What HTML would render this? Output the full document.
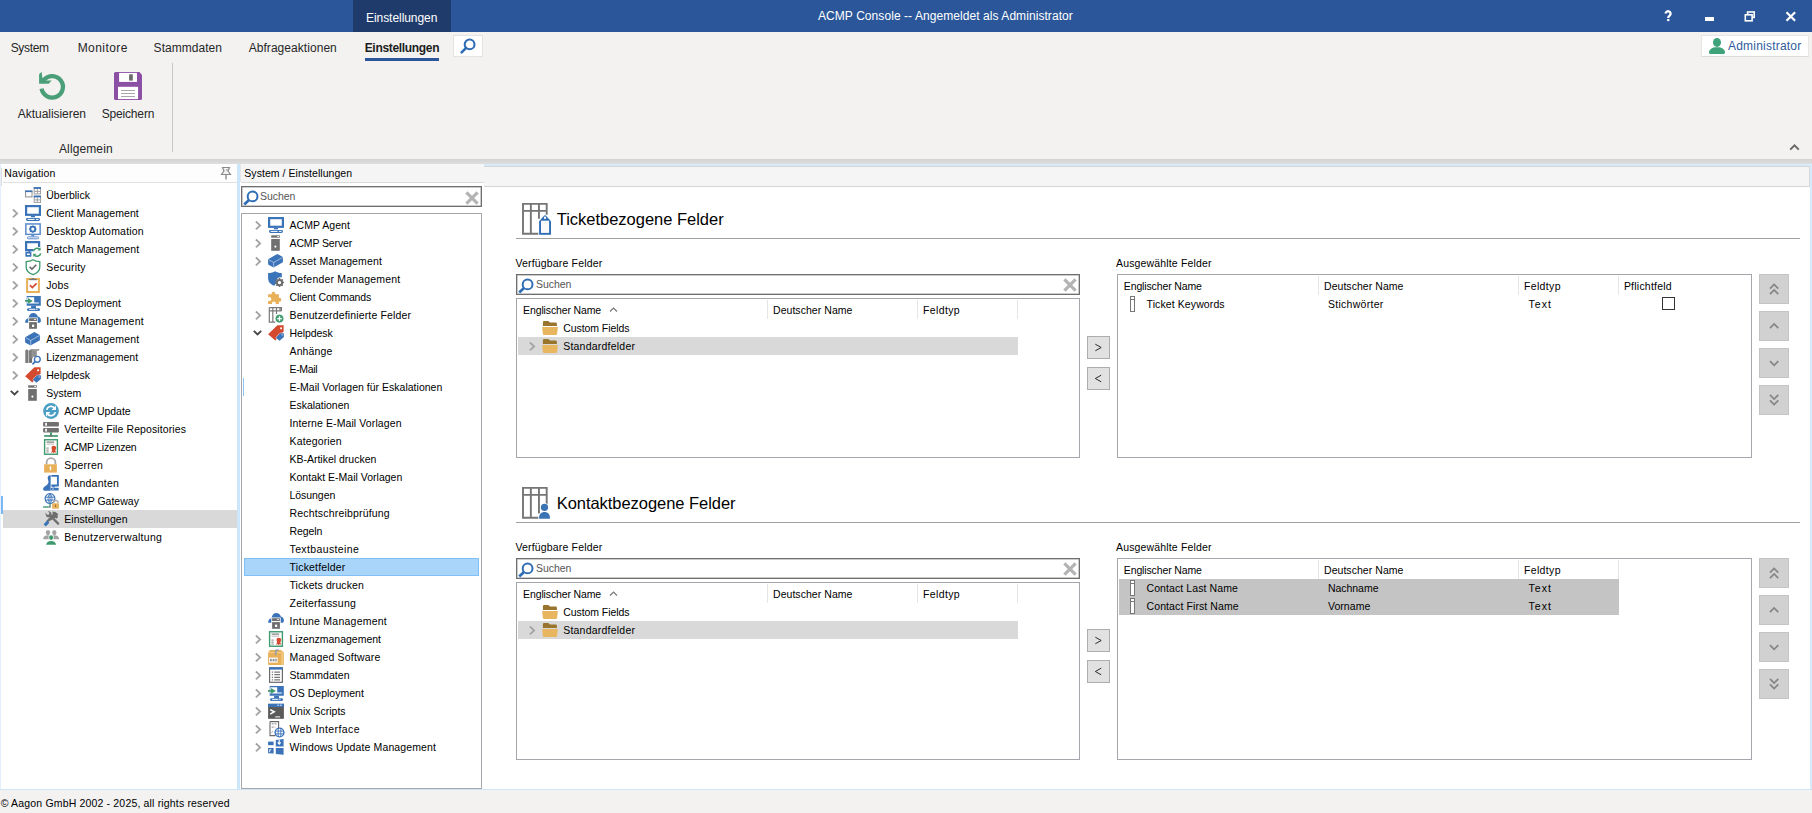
<!DOCTYPE html>
<html><head><meta charset="utf-8"><title>ACMP Console</title>
<style>
html,body{margin:0;padding:0;width:1812px;height:813px;overflow:hidden;background:#f3f2f1;font-family:"Liberation Sans", sans-serif;}
</style></head><body>
<div style="position:absolute;left:0px;top:0px;width:1812px;height:32px;background:#2b579a"></div><div style="position:absolute;left:353px;top:0px;width:98px;height:32px;background:#1f3b6b"></div><svg style="position:absolute;left:1660px;top:8px" width="16" height="16" viewBox="0 0 16 16"><path d="M5.6 5.6a2.5 2.4 0 1 1 4.2 1.8c-1 .8-1.6 1.2-1.6 2.5" fill="none" stroke="#fff" stroke-width="2.3"/><rect x="7.1" y="11" width="2.3" height="2.1" fill="#fff"/></svg><div style="position:absolute;left:1705px;top:17.4px;width:9px;height:3.2px;background:#fff"></div><svg style="position:absolute;left:1744px;top:11px" width="12" height="11" viewBox="0 0 12 11"><rect x="3.6" y="1" width="6.6" height="5.4" fill="none" stroke="#fff" stroke-width="1.6"/><rect x="1.3" y="3.8" width="6.8" height="6" fill="#2b579a" stroke="#fff" stroke-width="1.6"/></svg><svg style="position:absolute;left:1785px;top:11px" width="12" height="11" viewBox="0 0 12 11"><path d="M1.5 1.2l8.6 8.6M10.1 1.2l-8.6 8.6" stroke="#fff" stroke-width="2.2"/></svg><div style="position:absolute;left:0px;top:32px;width:1812px;height:127px;background:#f3f2f1"></div><div style="position:absolute;left:365px;top:58px;width:74px;height:3px;background:#2b579a"></div><div style="position:absolute;left:453px;top:35px;width:30px;height:22px;background:#fff;box-sizing:border-box;border:1px solid #e3e3e3"></div><svg style="position:absolute;left:459px;top:38px" width="18" height="17" viewBox="0 0 18 17"><circle cx="10.6" cy="6.4" r="4.9" fill="none" stroke="#2f6db5" stroke-width="2.1"/><path d="M7.2 9.8L2.6 14.4" stroke="#2f6db5" stroke-width="2.6" stroke-linecap="round"/></svg><div style="position:absolute;left:1701px;top:35px;width:108px;height:22px;background:#fff;box-sizing:border-box;border:1px solid #e6e6e6;border-bottom-color:#dcdcdc"></div><svg style="position:absolute;left:1708px;top:37px" width="18" height="18" viewBox="0 0 18 18"><ellipse cx="9" cy="5.4" rx="4" ry="4.5" fill="#3ea37a"/><path d="M1 15.5C1 12.6 3.2 11.1 6.3 10.2H11.7C14.8 11.1 17 12.6 17 15.5Q17 17.1 15.4 17.1H2.6Q1 17.1 1 15.5z" fill="#3ea37a"/></svg><svg style="position:absolute;left:37px;top:70px" width="30" height="32" viewBox="0 0 30 32"><path d="M4.6 18.7A10.75 10.75 0 1 0 6.95 9.94" fill="none" stroke="#4a9e78" stroke-width="4.3"/><path d="M4.61 1.84L5.35 7.74L9.33 10.4H14.65L11.69 13.79H2.1V4.2z" fill="#4a9e78"/></svg><svg style="position:absolute;left:114px;top:72px" width="28" height="28" viewBox="0 0 28 28"><path d="M0 1.5A1.5 1.5 0 0 1 1.5 0h24L28 3v23.5a1.5 1.5 0 0 1-1.5 1.5h-25A1.5 1.5 0 0 1 0 26.5z" fill="#8b4fa3"/><rect x="5.1" y="0.9" width="17.9" height="9" fill="#fff"/><rect x="15.1" y="2.3" width="3.7" height="6.3" fill="#6b6b6b"/><rect x="4" y="14.8" width="20.1" height="12.3" fill="#fff"/><path d="M7 18.5h14M7 21.5h14M7 24.5h14" stroke="#a8a8a8" stroke-width="1"/></svg><div style="position:absolute;left:172px;top:63px;width:1px;height:89px;background:#c6c6c6"></div><svg style="position:absolute;left:1789px;top:143px" width="11" height="9" viewBox="0 0 11 9"><path d="M1.2 6.6L5.5 2.4L9.8 6.6" fill="none" stroke="#666" stroke-width="2"/></svg><div style="position:absolute;left:0px;top:159px;width:1812px;height:5px;background:linear-gradient(#d3d3d3,#dedede)"></div><div style="position:absolute;left:0px;top:164px;width:1812px;height:626px;background:#ffffff"></div><div style="position:absolute;left:0px;top:164px;width:1px;height:625px;background:#e3f0fb"></div><div style="position:absolute;left:1px;top:496px;width:2px;height:18px;background:#7ab8f5"></div><div style="position:absolute;left:3px;top:164px;width:234px;height:18px;background:#fdfdfd"></div><div style="position:absolute;left:3px;top:182px;width:234px;height:1px;background:#e1e1e1"></div><div style="position:absolute;left:1px;top:168px;width:1px;height:18px;background:#dcdcdc"></div><svg style="position:absolute;left:220px;top:166px" width="12" height="14" viewBox="0 0 12 14"><path d="M2.5 1.5h7L8 5l2.5 3.5h-9L4 5z" fill="#f2f2f2" stroke="#8a8a8a" stroke-width="1.2"/><path d="M6 8.5v5" stroke="#8a8a8a" stroke-width="1.4"/><circle cx="7" cy="4" r="1" fill="#aaa"/></svg><div style="position:absolute;left:237px;top:164px;width:3px;height:625px;background:#cce6fa"></div><svg style="position:absolute;left:25px;top:187px;overflow:visible" width="16" height="16" viewBox="0 0 16 16"><rect x="0.6" y="4.1" width="6.4" height="5.8" fill="#fff" stroke="#8c8c8c" stroke-width="1"/><rect x="0.1" y="3.5" width="7.3" height="1.6" fill="#3b73b9"/><rect x="9.2" y="0.7" width="6.3" height="6.2" fill="#fff" stroke="#a0a0a0" stroke-width="1"/><rect x="8.7" y="0.1" width="7.3" height="1.8" fill="#3b73b9"/><path d="M12.35 1.9000000000000001v5M9.2 4.3999999999999995h6.3" stroke="#a0a0a0" stroke-width="1"/><rect x="9.2" y="9.2" width="6.3" height="6.2" fill="#fff" stroke="#a0a0a0" stroke-width="1"/><rect x="8.7" y="8.6" width="7.3" height="1.8" fill="#3b73b9"/><path d="M12.35 10.4v5M9.2 12.899999999999999h6.3" stroke="#a0a0a0" stroke-width="1"/></svg><svg style="position:absolute;left:11px;top:208px;overflow:visible" width="8" height="11" viewBox="0 0 8 11"><path d="M1.9 1.5L6.1 5.4L1.9 9.3" fill="none" stroke="#a3a3a3" stroke-width="1.8"/></svg><svg style="position:absolute;left:25px;top:205px;overflow:visible" width="16" height="16" viewBox="0 0 16 16"><rect x="1.1" y="1.1" width="13.8" height="8.7" fill="#fff" stroke="#3b73b9" stroke-width="2.2"/><rect x="5.9" y="10.7" width="4.1" height="1.6" fill="#3b73b9"/><rect x="1" y="12.9" width="14" height="3" rx="1.4" fill="#3b73b9"/><rect x="2.6" y="13.9" width="7" height="1" fill="#fff"/><rect x="11" y="13.9" width="2.5" height="1" fill="#fff"/></svg><svg style="position:absolute;left:11px;top:226px;overflow:visible" width="8" height="11" viewBox="0 0 8 11"><path d="M1.9 1.5L6.1 5.4L1.9 9.3" fill="none" stroke="#a3a3a3" stroke-width="1.8"/></svg><svg style="position:absolute;left:25px;top:223px;overflow:visible" width="16" height="16" viewBox="0 0 16 16"><rect x="0.85" y="0.95" width="14.3" height="10.4" fill="#fff" stroke="#5b8ccc" stroke-width="1.5"/><circle cx="7.8" cy="6.1" r="2.5" fill="none" stroke="#3b73b9" stroke-width="1.8"/><path d="M7.8 2.4v1.3M7.8 8.5v1.3M4.1 6.1h1.3M10.2 6.1h1.3M5.2 3.5l.9.9M9.5 7.8l.9.9M5.2 8.7l.9-.9M9.5 4.4l.9-.9" stroke="#3b73b9" stroke-width="1.3"/><rect x="6.3" y="11.8" width="3" height="1.6" fill="#5b8ccc"/><rect x="2.4" y="13.9" width="11.2" height="1.9" rx="0.9" fill="#fff" stroke="#5b8ccc" stroke-width="1"/></svg><svg style="position:absolute;left:11px;top:244px;overflow:visible" width="8" height="11" viewBox="0 0 8 11"><path d="M1.9 1.5L6.1 5.4L1.9 9.3" fill="none" stroke="#a3a3a3" stroke-width="1.8"/></svg><svg style="position:absolute;left:25px;top:241px;overflow:visible" width="16" height="16" viewBox="0 0 16 16"><path d="M8.5 9.1H1.1V1.1h13v5" fill="none" stroke="#3b73b9" stroke-width="2.2"/><path d="M4.4 9.5v2.2M1.2 11.6h4.4v3.3H1.2z" fill="none" stroke="#3b73b9" stroke-width="1.6"/><path d="M8.6 10.2a3.7 3.2 0 0 1 6.2-2" fill="none" stroke="#3f9a6e" stroke-width="1.5"/><path d="M15.6 6.3v3.2h-3.2z" fill="#3f9a6e"/><path d="M15.6 12.4a3.7 3.2 0 0 1-6.2 2" fill="none" stroke="#3f9a6e" stroke-width="1.5"/><path d="M8.2 16v-3.3h3.3z" fill="#3f9a6e"/></svg><svg style="position:absolute;left:11px;top:262px;overflow:visible" width="8" height="11" viewBox="0 0 8 11"><path d="M1.9 1.5L6.1 5.4L1.9 9.3" fill="none" stroke="#a3a3a3" stroke-width="1.8"/></svg><svg style="position:absolute;left:25px;top:259px;overflow:visible" width="16" height="16" viewBox="0 0 16 16"><path d="M8 0.7C6.1 2 4 2.6 1.2 2.7v5.1c0 3.8 2.7 6.5 6.8 7.9 4.1-1.4 6.8-4.1 6.8-7.9V2.7C12 2.6 9.9 2 8 0.7z" fill="#fff" stroke="#3f9a6e" stroke-width="1.3"/><path d="M4.6 7.8l2.4 2.3 4.3-4.4" fill="none" stroke="#6a6a6a" stroke-width="1.6"/></svg><svg style="position:absolute;left:11px;top:280px;overflow:visible" width="8" height="11" viewBox="0 0 8 11"><path d="M1.9 1.5L6.1 5.4L1.9 9.3" fill="none" stroke="#a3a3a3" stroke-width="1.8"/></svg><svg style="position:absolute;left:25px;top:277px;overflow:visible" width="16" height="16" viewBox="0 0 16 16"><rect x="2.1" y="2" width="11.8" height="13" fill="#fff" stroke="#e9b05a" stroke-width="2"/><path d="M4.2 3.1h7.6L11 1.7H9.2a1.3 1.3 0 0 0-2.4 0H5z" fill="#777"/><rect x="4.2" y="2.2" width="7.6" height="1" fill="#777"/><path d="M4.9 8.2l2.4 2.4 4.3-4.3" fill="none" stroke="#d44a2e" stroke-width="1.7"/></svg><svg style="position:absolute;left:11px;top:298px;overflow:visible" width="8" height="11" viewBox="0 0 8 11"><path d="M1.9 1.5L6.1 5.4L1.9 9.3" fill="none" stroke="#a3a3a3" stroke-width="1.8"/></svg><svg style="position:absolute;left:25px;top:295px;overflow:visible" width="16" height="16" viewBox="0 0 16 16"><path d="M1.7 1H15.8V10.75H1.7z" fill="#3b73b9"/><path d="M2.3 2.3H9.2V7.4H13.85V8.5H2.3z" fill="#fff"/><rect x="6.1" y="10.75" width="4.9" height="2.45" fill="#3b73b9"/><rect x="2.1" y="13.2" width="12.9" height="2.9" rx="1.4" fill="#3b73b9"/><rect x="4.1" y="14.2" width="6.2" height="0.9" fill="#fff"/><rect x="11.2" y="14.2" width="1.3" height="0.9" fill="#fff"/><rect x="0" y="5" width="5.7" height="1.75" fill="#3f9a6e"/><path d="M3 3L7.9 5.9L3 8.75z" fill="#3f9a6e"/></svg><svg style="position:absolute;left:11px;top:316px;overflow:visible" width="8" height="11" viewBox="0 0 8 11"><path d="M1.9 1.5L6.1 5.4L1.9 9.3" fill="none" stroke="#a3a3a3" stroke-width="1.8"/></svg><svg style="position:absolute;left:25px;top:313px;overflow:visible" width="16" height="16" viewBox="0 0 16 16"><path d="M0.1 9.8C0.1 7 1.5 5.5 3.5 5.2C4 2 6 0.1 8.3 0.1C10.5 0.1 12.2 1.5 12.8 3.6C14.6 3.9 15.9 5.6 15.9 7.6C15.9 8.6 15.5 9.4 15 9.8z" fill="#3b73b9"/><rect x="3.3" y="4.5" width="9.4" height="11.5" fill="#fff"/><rect x="4.1" y="5.2" width="7.8" height="2.8" fill="#6e6e6e"/><rect x="9" y="5.9" width="2" height="0.9" fill="#fff"/><rect x="4.1" y="9.1" width="7.8" height="6.7" fill="#6e6e6e"/><rect x="7" y="11.6" width="2.2" height="2.4" fill="#fff"/></svg><svg style="position:absolute;left:11px;top:334px;overflow:visible" width="8" height="11" viewBox="0 0 8 11"><path d="M1.9 1.5L6.1 5.4L1.9 9.3" fill="none" stroke="#a3a3a3" stroke-width="1.8"/></svg><svg style="position:absolute;left:25px;top:331px;overflow:visible" width="16" height="16" viewBox="0 0 16 16"><path d="M0.1 6.3L9.3 0.9 14.9 4v5.2L5.6 14.4 0.1 11.4z" fill="#3b73b9"/><path d="M0.6 6.6l5.1 2.9 8.9-5.1M5.7 9.5v4.7" fill="none" stroke="#fff" stroke-width="0.6" opacity="0.85"/></svg><svg style="position:absolute;left:11px;top:352px;overflow:visible" width="8" height="11" viewBox="0 0 8 11"><path d="M1.9 1.5L6.1 5.4L1.9 9.3" fill="none" stroke="#a3a3a3" stroke-width="1.8"/></svg><svg style="position:absolute;left:25px;top:349px;overflow:visible" width="16" height="16" viewBox="0 0 16 16"><path d="M0.3 1.5l1.6-1.3 1.6 1.3v12.4H0.3z" fill="#7a7a7a"/><rect x="4.1" y="1.2" width="3" height="12.7" fill="#6e6e6e"/><path d="M5.3 0.2h9.3l-.9 1.6H7.8v7.5H5.3z" fill="#858585"/><rect x="7.8" y="1.8" width="4" height="6" fill="#8e8e8e"/><circle cx="12.3" cy="10.3" r="2.9" fill="#fff" stroke="#3b73b9" stroke-width="1.4"/><path d="M10.3 12.4l-2.8 3" stroke="#3b73b9" stroke-width="1.7"/></svg><svg style="position:absolute;left:11px;top:370px;overflow:visible" width="8" height="11" viewBox="0 0 8 11"><path d="M1.9 1.5L6.1 5.4L1.9 9.3" fill="none" stroke="#a3a3a3" stroke-width="1.8"/></svg><svg style="position:absolute;left:25px;top:367px;overflow:visible" width="16" height="16" viewBox="0 0 16 16"><path d="M0.1 9.3L9.4 0.3H15.6V6.5L7.3 15.5z" fill="#d44a2e"/><rect x="12.2" y="2.4" width="1.8" height="1.8" fill="#fff"/><path d="M8 12.7L12.1 8.3H15.9V12L11.5 15.8z" fill="#3b73b9" stroke="#fff" stroke-width="1" paint-order="stroke"/><rect x="13.6" y="9.4" width="1" height="1" fill="#fff"/></svg><svg style="position:absolute;left:9px;top:388px;overflow:visible" width="11" height="9" viewBox="0 0 11 9"><path d="M1.8 2.8L5.5 6.5L9.2 2.8" fill="none" stroke="#444" stroke-width="1.8"/></svg><svg style="position:absolute;left:25px;top:385px;overflow:visible" width="16" height="16" viewBox="0 0 16 16"><rect x="3.2" y="0.3" width="8.6" height="2.4" fill="#707070"/><rect x="9.2" y="1" width="1.9" height="0.9" fill="#fff"/><rect x="3.2" y="4" width="8.6" height="11.8" fill="#707070"/><circle cx="7.4" cy="11.6" r="1.1" fill="#fff"/></svg><svg style="position:absolute;left:43px;top:403px;overflow:visible" width="16" height="16" viewBox="0 0 16 16"><circle cx="8" cy="8" r="7.9" fill="#4a9ec4"/><path d="M3.7 6.9A4.5 4.5 0 0 1 11.2 4.6" fill="none" stroke="#fff" stroke-width="1.7"/><path d="M13 2.4v4.6H8.5z" fill="#fff"/><path d="M12.3 9.1A4.5 4.5 0 0 1 4.8 11.4" fill="none" stroke="#fff" stroke-width="1.7"/><path d="M3 13.6V9h4.5z" fill="#fff"/></svg><svg style="position:absolute;left:43px;top:421px;overflow:visible" width="16" height="16" viewBox="0 0 16 16"><rect x="0.1" y="1" width="15.8" height="4.5" rx="0.9" fill="#707070"/><rect x="2.2" y="1.8" width="1.7" height="2.9" fill="#fff"/><rect x="0.1" y="6.9" width="15.8" height="4.5" rx="0.9" fill="#707070"/><rect x="2.2" y="7.7" width="1.7" height="2.9" fill="#fff"/><rect x="7" y="11.4" width="2" height="2.7" fill="#3f9a6e"/><rect x="1.1" y="14.1" width="13.8" height="1.7" fill="#3f9a6e"/><rect x="6.5" y="14.1" width="3" height="1.7" fill="#777"/></svg><svg style="position:absolute;left:43px;top:439px;overflow:visible" width="16" height="16" viewBox="0 0 16 16"><rect x="1.6" y="0.75" width="12.8" height="14.5" fill="#fff" stroke="#3f9a6e" stroke-width="1.4"/><path d="M3.6 3.1h7.6" stroke="#555" stroke-width="0.9"/><path d="M3.6 5.1h7.6" stroke="#aaa" stroke-width="0.8"/><path d="M3.4 9.1h2.3M3.4 11.1h2.3M3.4 13h2.3" stroke="#777" stroke-width="0.9"/><circle cx="10.8" cy="9.1" r="2.4" fill="#d44a2e"/><path d="M9.2 10.5l-1 3.6 1.6-1 1 1.5.9-1.5 1.5 1-1.1-3.6z" fill="#d44a2e"/></svg><svg style="position:absolute;left:43px;top:457px;overflow:visible" width="16" height="16" viewBox="0 0 16 16"><path d="M3.6 7.4V5.6a4.4 4.4 0 0 1 8.8 0v1.8" fill="none" stroke="#a9a9a9" stroke-width="1.8"/><rect x="1.1" y="7.3" width="12.8" height="8.3" fill="#e9b05a"/><rect x="6.8" y="9.8" width="1.3" height="3.5" fill="#fff"/><circle cx="7.45" cy="10.3" r="0.9" fill="#fff"/></svg><svg style="position:absolute;left:43px;top:475px;overflow:visible" width="16" height="16" viewBox="0 0 16 16"><path d="M8.3 0.9h6.6v9.6H8.3" fill="none" stroke="#3b73b9" stroke-width="1.9"/><rect x="9.3" y="10.5" width="2.6" height="1.8" fill="#3b73b9"/><rect x="7.8" y="12.8" width="7.8" height="2.6" rx="0.5" fill="#3b73b9"/><rect x="9.2" y="13.7" width="1.6" height="0.8" fill="#fff"/><path d="M7.7 0.3a2.4 2.4 0 0 0-3 2.6c0 1.6.8 2.6.8 4.1-.1 1.4-1.1 2.8-2.8 3.8C1.3 11.6.1 12.8.1 14.2c0 1.2 1 1.6 2.5 1.6h5z" fill="#3b73b9"/></svg><svg style="position:absolute;left:43px;top:493px;overflow:visible" width="16" height="16" viewBox="0 0 16 16"><circle cx="7" cy="5.6" r="4.9" fill="#fff" stroke="#3b73b9" stroke-width="1.2"/><path d="M2.1 4.2h9.8M2.1 7.1h9.8M7 0.7v9.8M7 0.7c-2.6 2.7-2.6 7.2 0 9.8M7 0.7c2.6 2.7 2.6 7.2 0 9.8" fill="none" stroke="#3b73b9" stroke-width="0.9"/><rect x="6.3" y="10.5" width="1.4" height="3.2" fill="#3f9a6e"/><rect x="0.1" y="13.3" width="5.6" height="1.4" fill="#3f9a6e"/><rect x="5.7" y="13.3" width="2" height="1.4" fill="#777"/><path d="M10.8 10.3V9.6a2.1 2.1 0 0 1 4.2 0v.7" fill="none" stroke="#a9a9a9" stroke-width="1.3"/><rect x="9.1" y="10.3" width="6.8" height="5.4" fill="#e9b05a"/><rect x="12.1" y="11.7" width="0.9" height="2.3" fill="#8a6a30"/></svg><div style="position:absolute;left:3px;top:510px;width:234px;height:18px;background:#d9d9d9"></div><svg style="position:absolute;left:43px;top:511px;overflow:visible" width="16" height="16" viewBox="0 0 16 16"><path d="M3 1.2a3.3 3.3 0 0 0 0.4 4.2 3.3 3.3 0 0 0 3.6.6l7.4 7.4a1.1 1.1 0 0 0 1.6-1.6L8.6 4.4A3.3 3.3 0 0 0 4.8 0.3L6.6 2.1 5.4 4 3.4 3.2z" fill="#6e6e6e"/><path d="M9.3 0.8c1.7-.4 3.4.1 4.6 1.3l1.5 1.4-1.3 1.3 1.1 1.2-1.9 1.8L12.2 6.7 4.5 11.2 3.2 10 9.8 3z" fill="#6e6e6e"/><path d="M0.6 13.2l3.6-3.6 2.2 2.2-3.6 3.6z" fill="#3b73b9"/></svg><svg style="position:absolute;left:43px;top:529px;overflow:visible" width="16" height="16" viewBox="0 0 16 16"><ellipse cx="5" cy="3.6" rx="2.2" ry="2.6" fill="#a4a4a4"/><path d="M0.1 10.2c0-2.6 2-3.9 4.9-3.9s4.9 1.3 4.9 3.9z" fill="#a4a4a4"/><ellipse cx="11.3" cy="3.6" rx="2.2" ry="2.6" fill="#a4a4a4"/><path d="M6.4 10.2c0-2.6 2-3.9 4.9-3.9s4.9 1.3 4.9 3.9z" fill="#a4a4a4"/><ellipse cx="8.1" cy="8.6" rx="2.6" ry="3" fill="#fff"/><ellipse cx="8.1" cy="8.6" rx="2" ry="2.4" fill="#3f9a6e"/><path d="M3.2 15.8c0-2.6 2.1-3.9 4.9-3.9s4.9 1.3 4.9 3.9z" fill="#3f9a6e"/></svg><div style="position:absolute;left:240px;top:164px;width:244px;height:18px;background:#f5f5f5"></div><div style="position:absolute;left:241px;top:182px;width:243px;height:1px;background:#dadada"></div><div style="position:absolute;left:240px;top:164px;width:1px;height:18px;background:#e6e6e6"></div><div style="position:absolute;left:241px;top:186px;width:241px;height:21px;background:#fff;box-sizing:border-box;border:1px solid #6f6f6f;box-shadow:inset 0 0 0 0.5px #9a9a9a"></div><svg style="position:absolute;left:243px;top:189px" width="16" height="17" viewBox="0 0 16 17"><circle cx="9.6" cy="7.4" r="4.9" fill="none" stroke="#2f6db5" stroke-width="2"/><path d="M6 10.9L1.2 15.4" stroke="#2f6db5" stroke-width="2.8"/></svg><svg style="position:absolute;left:464px;top:190px" width="16" height="16" viewBox="0 0 16 16"><path d="M2.4 2.4L13.6 13.6M13.6 2.4L2.4 13.6" stroke="#b3b3b3" stroke-width="3.2"/></svg><div style="position:absolute;left:241px;top:213px;width:241px;height:576px;background:#fff;box-sizing:border-box;border:1px solid #a4a6ac"></div><div style="position:absolute;left:243px;top:378px;width:1px;height:18px;background:#8cc4f8"></div><svg style="position:absolute;left:253.85px;top:220.25px;overflow:visible" width="8" height="11" viewBox="0 0 8 11"><path d="M1.9 1.5L6.1 5.4L1.9 9.3" fill="none" stroke="#a3a3a3" stroke-width="1.8"/></svg><svg style="position:absolute;left:268px;top:217px;overflow:visible" width="16" height="16" viewBox="0 0 16 16"><rect x="1.1" y="1.1" width="13.8" height="8.7" fill="#fff" stroke="#3b73b9" stroke-width="2.2"/><rect x="5.9" y="10.7" width="4.1" height="1.6" fill="#3b73b9"/><rect x="1" y="12.9" width="14" height="3" rx="1.4" fill="#3b73b9"/><rect x="2.6" y="13.9" width="7" height="1" fill="#fff"/><rect x="11" y="13.9" width="2.5" height="1" fill="#fff"/></svg><svg style="position:absolute;left:253.85px;top:238.25px;overflow:visible" width="8" height="11" viewBox="0 0 8 11"><path d="M1.9 1.5L6.1 5.4L1.9 9.3" fill="none" stroke="#a3a3a3" stroke-width="1.8"/></svg><svg style="position:absolute;left:268px;top:235px;overflow:visible" width="16" height="16" viewBox="0 0 16 16"><rect x="3.2" y="0.3" width="8.6" height="2.4" fill="#707070"/><rect x="9.2" y="1" width="1.9" height="0.9" fill="#fff"/><rect x="3.2" y="4" width="8.6" height="11.8" fill="#707070"/><circle cx="7.4" cy="11.6" r="1.1" fill="#fff"/></svg><svg style="position:absolute;left:253.85px;top:256.25px;overflow:visible" width="8" height="11" viewBox="0 0 8 11"><path d="M1.9 1.5L6.1 5.4L1.9 9.3" fill="none" stroke="#a3a3a3" stroke-width="1.8"/></svg><svg style="position:absolute;left:268px;top:253px;overflow:visible" width="16" height="16" viewBox="0 0 16 16"><path d="M0.1 6.3L9.3 0.9 14.9 4v5.2L5.6 14.4 0.1 11.4z" fill="#3b73b9"/><path d="M0.6 6.6l5.1 2.9 8.9-5.1M5.7 9.5v4.7" fill="none" stroke="#fff" stroke-width="0.6" opacity="0.85"/></svg><svg style="position:absolute;left:268px;top:271px;overflow:visible" width="16" height="16" viewBox="0 0 16 16"><path d="M7.1 0.2C5.3 1.4 3.2 2 0.1 2.1v5.2c0 3.7 2.5 6.3 6.1 7.5l2-2.5A4.5 4.5 0 0 1 13.8 6.6V2.1C11 2 8.9 1.4 7.1 0.2z" fill="#3b73b9"/><circle cx="11.5" cy="11.6" r="2.7" fill="none" stroke="#6e6e6e" stroke-width="2"/><path d="M11.5 7.1v1.8M11.5 14.3v1.8M7 11.6h1.8M14.2 11.6H16M8.3 8.4l1.3 1.3M13.4 13.5l1.3 1.3M8.3 14.8l1.3-1.3M13.4 9.7l1.3-1.3" stroke="#6e6e6e" stroke-width="1.5"/></svg><svg style="position:absolute;left:268px;top:289px;overflow:visible" width="16" height="16" viewBox="0 0 16 16"><path d="M0.1 5.3h3.6a1.9 1.9 0 1 1 3.5 0h3.7v3.6a1.9 1.9 0 1 1 0 3.7V15H7.7a1.9 1.9 0 1 0-3.6 0H0.1v-3.5a1.9 1.9 0 1 0 0-2.8z" fill="#e9b05a"/></svg><svg style="position:absolute;left:253.85px;top:310.25px;overflow:visible" width="8" height="11" viewBox="0 0 8 11"><path d="M1.9 1.5L6.1 5.4L1.9 9.3" fill="none" stroke="#a3a3a3" stroke-width="1.8"/></svg><svg style="position:absolute;left:268px;top:307px;overflow:visible" width="16" height="16" viewBox="0 0 16 16"><path d="M1.3 0.6h12.1v3.3M1.3 0.6v14.6h6M1.3 3.9h12.1M4.8 0.6v14.6M8.5 0.6v6.4M12 0.6v3.3" fill="none" stroke="#7a7a7a" stroke-width="1.2"/><circle cx="11.5" cy="11.6" r="4.4" fill="#3f9a6e" stroke="#fff" stroke-width="0.8"/><path d="M11.5 9.2v4.8M9.1 11.6h4.8" stroke="#fff" stroke-width="1.4"/></svg><svg style="position:absolute;left:251.9px;top:328px;overflow:visible" width="11" height="9" viewBox="0 0 11 9"><path d="M1.8 2.8L5.5 6.5L9.2 2.8" fill="none" stroke="#444" stroke-width="1.8"/></svg><svg style="position:absolute;left:268px;top:325px;overflow:visible" width="16" height="16" viewBox="0 0 16 16"><path d="M0.1 9.3L9.4 0.3H15.6V6.5L7.3 15.5z" fill="#d44a2e"/><rect x="12.2" y="2.4" width="1.8" height="1.8" fill="#fff"/><path d="M8 12.7L12.1 8.3H15.9V12L11.5 15.8z" fill="#3b73b9" stroke="#fff" stroke-width="1" paint-order="stroke"/><rect x="13.6" y="9.4" width="1" height="1" fill="#fff"/></svg><div style="position:absolute;left:244px;top:558px;width:235px;height:18px;background:#a9d5fb;box-sizing:border-box;border:1px solid #80c0f6"></div><svg style="position:absolute;left:268px;top:613px;overflow:visible" width="16" height="16" viewBox="0 0 16 16"><path d="M0.1 9.8C0.1 7 1.5 5.5 3.5 5.2C4 2 6 0.1 8.3 0.1C10.5 0.1 12.2 1.5 12.8 3.6C14.6 3.9 15.9 5.6 15.9 7.6C15.9 8.6 15.5 9.4 15 9.8z" fill="#3b73b9"/><rect x="3.3" y="4.5" width="9.4" height="11.5" fill="#fff"/><rect x="4.1" y="5.2" width="7.8" height="2.8" fill="#6e6e6e"/><rect x="9" y="5.9" width="2" height="0.9" fill="#fff"/><rect x="4.1" y="9.1" width="7.8" height="6.7" fill="#6e6e6e"/><rect x="7" y="11.6" width="2.2" height="2.4" fill="#fff"/></svg><svg style="position:absolute;left:253.85px;top:634.25px;overflow:visible" width="8" height="11" viewBox="0 0 8 11"><path d="M1.9 1.5L6.1 5.4L1.9 9.3" fill="none" stroke="#a3a3a3" stroke-width="1.8"/></svg><svg style="position:absolute;left:268px;top:631px;overflow:visible" width="16" height="16" viewBox="0 0 16 16"><rect x="1.6" y="0.75" width="12.8" height="14.5" fill="#fff" stroke="#3f9a6e" stroke-width="1.4"/><path d="M3.6 3.1h7.6" stroke="#555" stroke-width="0.9"/><path d="M3.6 5.1h7.6" stroke="#aaa" stroke-width="0.8"/><path d="M3.4 9.1h2.3M3.4 11.1h2.3M3.4 13h2.3" stroke="#777" stroke-width="0.9"/><circle cx="10.8" cy="9.1" r="2.4" fill="#d44a2e"/><path d="M9.2 10.5l-1 3.6 1.6-1 1 1.5.9-1.5 1.5 1-1.1-3.6z" fill="#d44a2e"/></svg><svg style="position:absolute;left:253.85px;top:652.25px;overflow:visible" width="8" height="11" viewBox="0 0 8 11"><path d="M1.9 1.5L6.1 5.4L1.9 9.3" fill="none" stroke="#a3a3a3" stroke-width="1.8"/></svg><svg style="position:absolute;left:268px;top:649px;overflow:visible" width="16" height="16" viewBox="0 0 16 16"><path d="M0.1 3.4L2 1h11l2.9 2.4V16H0.1z" fill="#e9b05a"/><path d="M0.1 3.4h15.8" stroke="#f5d49b" stroke-width="0.8"/><path d="M13 3.4h2.9V16H13z" fill="#f0c37a"/><path d="M6.9 1l3.3-.9.9 1.2-2.6 1.4v3.6H6.9z" fill="#9aa0a8"/><rect x="1" y="8.6" width="8.6" height="5" fill="#fff"/><path d="M2.4 9.8v2.6M3.8 9.8v2.6M5.4 9.8v2.6M7 9.8v2.6M8.2 9.8v2.6" stroke="#555" stroke-width="0.7"/></svg><svg style="position:absolute;left:253.85px;top:670.25px;overflow:visible" width="8" height="11" viewBox="0 0 8 11"><path d="M1.9 1.5L6.1 5.4L1.9 9.3" fill="none" stroke="#a3a3a3" stroke-width="1.8"/></svg><svg style="position:absolute;left:268px;top:667px;overflow:visible" width="16" height="16" viewBox="0 0 16 16"><rect x="1.6" y="0.8" width="12.8" height="14.5" fill="#fff" stroke="#6a6a6a" stroke-width="1.2"/><rect x="1" y="0.3" width="14" height="2.3" fill="#3b73b9"/><path d="M3.8 5.1h1.3M6.3 5.1h5.8M3.8 7.7h1.3M6.3 7.7h5.8M3.8 10.3h1.3M6.3 10.3h5.8M3.8 12.9h1.3M6.3 12.9h5.8" stroke="#555" stroke-width="1"/></svg><svg style="position:absolute;left:253.85px;top:688.25px;overflow:visible" width="8" height="11" viewBox="0 0 8 11"><path d="M1.9 1.5L6.1 5.4L1.9 9.3" fill="none" stroke="#a3a3a3" stroke-width="1.8"/></svg><svg style="position:absolute;left:268px;top:685px;overflow:visible" width="16" height="16" viewBox="0 0 16 16"><path d="M1.7 1H15.8V10.75H1.7z" fill="#3b73b9"/><path d="M2.3 2.3H9.2V7.4H13.85V8.5H2.3z" fill="#fff"/><rect x="6.1" y="10.75" width="4.9" height="2.45" fill="#3b73b9"/><rect x="2.1" y="13.2" width="12.9" height="2.9" rx="1.4" fill="#3b73b9"/><rect x="4.1" y="14.2" width="6.2" height="0.9" fill="#fff"/><rect x="11.2" y="14.2" width="1.3" height="0.9" fill="#fff"/><rect x="0" y="5" width="5.7" height="1.75" fill="#3f9a6e"/><path d="M3 3L7.9 5.9L3 8.75z" fill="#3f9a6e"/></svg><svg style="position:absolute;left:253.85px;top:706.25px;overflow:visible" width="8" height="11" viewBox="0 0 8 11"><path d="M1.9 1.5L6.1 5.4L1.9 9.3" fill="none" stroke="#a3a3a3" stroke-width="1.8"/></svg><svg style="position:absolute;left:268px;top:703px;overflow:visible" width="16" height="16" viewBox="0 0 16 16"><rect x="0.1" y="0.8" width="15.8" height="15" fill="#5a5a5a"/><rect x="0.1" y="0.8" width="15.8" height="3.2" fill="#3b73b9"/><path d="M9.3 2.2h1.8M12 2.2h1.8" stroke="#fff" stroke-width="0.9"/><path d="M2.2 6.6l4 2.2-4 2.3" fill="none" stroke="#fff" stroke-width="1.6"/><path d="M7.2 13.9h4.9" stroke="#fff" stroke-width="1"/></svg><svg style="position:absolute;left:253.85px;top:724.25px;overflow:visible" width="8" height="11" viewBox="0 0 8 11"><path d="M1.9 1.5L6.1 5.4L1.9 9.3" fill="none" stroke="#a3a3a3" stroke-width="1.8"/></svg><svg style="position:absolute;left:268px;top:721px;overflow:visible" width="16" height="16" viewBox="0 0 16 16"><path d="M2 0.6h8.6v7" fill="none" stroke="#6a6a6a" stroke-width="1.1"/><path d="M2 0.6v14h5.5" fill="none" stroke="#6a6a6a" stroke-width="1.1"/><path d="M3.7 2.9h1.9M6.5 2.9h1.9M3.7 6.1h1.9" stroke="#777" stroke-width="0.9"/><rect x="6.6" y="5.7" width="0.8" height="0.8" fill="#d44a2e"/><path d="M3.5 11.6l1.3-1.2" stroke="#777" stroke-width="0.8"/><circle cx="11.5" cy="11.5" r="4.4" fill="#fff" stroke="#3b73b9" stroke-width="1.4"/><path d="M7.4 10.1h8.2M7.4 12.9h8.2M10.2 7.3v8.4M12.8 7.3v8.4" stroke="#3b73b9" stroke-width="0.9"/></svg><svg style="position:absolute;left:253.85px;top:742.25px;overflow:visible" width="8" height="11" viewBox="0 0 8 11"><path d="M1.9 1.5L6.1 5.4L1.9 9.3" fill="none" stroke="#a3a3a3" stroke-width="1.8"/></svg><svg style="position:absolute;left:268px;top:739px;overflow:visible" width="16" height="16" viewBox="0 0 16 16"><rect x="0.1" y="2.6" width="5.5" height="3.6" fill="#3b73b9"/><path d="M7.8 1.1L15.6 0.1V7.5H7.8z" fill="#3b73b9"/><path d="M11.2 0.5v4.2M9.7 3.4l1.5 1.7 1.5-1.7" fill="none" stroke="#fff" stroke-width="1.1"/><path d="M0.1 9h5.5v5.6L0.1 14.2z" fill="#3b73b9"/><path d="M1.7 13.2v-2.6h1.6" fill="none" stroke="#fff" stroke-width="0.9"/><path d="M7.8 9h7.8v6.8L7.8 15z" fill="#3b73b9"/></svg><div style="position:absolute;left:484px;top:164px;width:1326px;height:2px;background:#d8ebfa"></div><div style="position:absolute;left:484px;top:166px;width:1326px;height:21px;background:#f5f5f5;box-sizing:border-box;border:1px solid #d6d6d6;border-left:none"></div><div style="position:absolute;left:1810px;top:164px;width:2px;height:625px;background:#d6ebfb"></div><svg style="position:absolute;left:521px;top:202px;overflow:visible" width="32" height="34" viewBox="0 0 32 34"><path d="M2 1.9H25.7V11.7M2 1.9V31.8H16.7M2 8.85H25.7M9.85 1.9V31.8M17.95 1.9V15.8" fill="none" stroke="#767676" stroke-width="1.9" stroke-linecap="square"/><path d="M18.1 19.2L23.3 13.6Q24.05 12.9 24.8 13.6L30 19.2V32.8H18.1z" fill="#2e6db4" stroke="#fff" stroke-width="1.2" paint-order="stroke"/><rect x="20" y="18.7" width="8.1" height="12.2" fill="#fafafa"/><rect x="23" y="14.7" width="2.1" height="2.1" fill="#fff"/></svg><div style="position:absolute;left:516px;top:238px;width:1284px;height:1px;background:#a0a0a0"></div><div style="position:absolute;left:516px;top:274px;width:564px;height:21px;background:#fff;box-sizing:border-box;border:1px solid #6f6f6f;box-shadow:inset 0 0 0 0.5px #9a9a9a"></div><svg style="position:absolute;left:518px;top:277px" width="16" height="17" viewBox="0 0 16 17"><circle cx="9.6" cy="7.4" r="4.9" fill="none" stroke="#2f6db5" stroke-width="2"/><path d="M6 10.9L1.2 15.4" stroke="#2f6db5" stroke-width="2.8"/></svg><svg style="position:absolute;left:1062px;top:277px" width="16" height="16" viewBox="0 0 16 16"><path d="M2.4 2.4L13.6 13.6M13.6 2.4L2.4 13.6" stroke="#b3b3b3" stroke-width="3.2"/></svg><div style="position:absolute;left:516px;top:298px;width:564px;height:160px;background:#fff;box-sizing:border-box;border:1px solid #a4a6ac"></div><svg style="position:absolute;left:609px;top:306px" width="9" height="7" viewBox="0 0 9 7"><path d="M1 5.5l3.5-3.5 3.5 3.5" fill="none" stroke="#777" stroke-width="1.2"/></svg><div style="position:absolute;left:767px;top:300px;width:1px;height:19px;background:#e5e5e5"></div><div style="position:absolute;left:917px;top:300px;width:1px;height:19px;background:#e5e5e5"></div><div style="position:absolute;left:1017px;top:300px;width:1px;height:19px;background:#e5e5e5"></div><svg style="position:absolute;left:542px;top:320px;overflow:visible" width="16" height="16" viewBox="0 0 16 16"><path d="M0.9 5.9V2.2Q0.9 1 2.1 1H6.4L8 2.6H13.8Q14.9 2.6 14.9 3.7V5.9z" fill="#98742c"/><path d="M0.1 7.1H15.9L15.1 14.1Q15 15 14 15H2Q1 15 0.9 14.1z" fill="#e9b660"/></svg><div style="position:absolute;left:518px;top:337px;width:500px;height:18px;background:#d9d9d9"></div><svg style="position:absolute;left:528.2px;top:341px;overflow:visible" width="8" height="11" viewBox="0 0 8 11"><path d="M1.9 1.5L6.1 5.4L1.9 9.3" fill="none" stroke="#a3a3a3" stroke-width="1.8"/></svg><svg style="position:absolute;left:542px;top:338px;overflow:visible" width="16" height="16" viewBox="0 0 16 16"><path d="M0.9 5.9V2.2Q0.9 1 2.1 1H6.4L8 2.6H13.8Q14.9 2.6 14.9 3.7V5.9z" fill="#98742c"/><path d="M0.1 7.1H15.9L15.1 14.1Q15 15 14 15H2Q1 15 0.9 14.1z" fill="#e9b660"/></svg><div style="position:absolute;left:1117px;top:274px;width:635px;height:184px;background:#fff;box-sizing:border-box;border:1px solid #a4a6ac"></div><div style="position:absolute;left:1087px;top:336px;width:23px;height:23px;background:#e1e1e1;box-sizing:border-box;border:1px solid #adadad"></div><svg style="position:absolute;left:1087px;top:336px" width="23" height="23" viewBox="0 0 23 23"><path d="M8.3 8.2L14.2 11.5L8.3 14.8" fill="none" stroke="#222" stroke-width="0.95"/></svg><div style="position:absolute;left:1087px;top:367px;width:23px;height:23px;background:#e1e1e1;box-sizing:border-box;border:1px solid #adadad"></div><svg style="position:absolute;left:1087px;top:367px" width="23" height="23" viewBox="0 0 23 23"><path d="M14.2 8.2L8.3 11.5L14.2 14.8" fill="none" stroke="#222" stroke-width="0.95"/></svg><div style="position:absolute;left:1318px;top:276px;width:1px;height:19px;background:#e5e5e5"></div><div style="position:absolute;left:1518px;top:276px;width:1px;height:19px;background:#e5e5e5"></div><div style="position:absolute;left:1618px;top:276px;width:1px;height:19px;background:#e5e5e5"></div><svg style="position:absolute;left:1129px;top:296px" width="7" height="16" viewBox="0 0 7 16"><rect x="1.5" y="0.5" width="4" height="15" fill="#fff" stroke="#777" stroke-width="1"/><path d="M1.5 3.5h4" stroke="#777" stroke-width="1"/></svg><div style="position:absolute;left:1662px;top:297px;width:13px;height:13px;background:#fff;box-sizing:border-box;border:1px solid #333"></div><div style="position:absolute;left:1759px;top:274px;width:30px;height:30px;background:#d1d1d1;box-sizing:border-box;border:1px solid #c4c4c4"></div><svg style="position:absolute;left:1759px;top:274px" width="30" height="30" viewBox="0 0 30 30"><path d="M11 14.7L15.1 10.5L19.3 14.7M11 20.2L15.1 16L19.3 20.2" fill="none" stroke="#858585" stroke-width="1.7"/></svg><div style="position:absolute;left:1759px;top:311px;width:30px;height:30px;background:#d1d1d1;box-sizing:border-box;border:1px solid #c4c4c4"></div><svg style="position:absolute;left:1759px;top:311px" width="30" height="30" viewBox="0 0 30 30"><path d="M11 17.1L15.1 12.9L19.3 17.1" fill="none" stroke="#858585" stroke-width="1.7"/></svg><div style="position:absolute;left:1759px;top:348px;width:30px;height:30px;background:#d1d1d1;box-sizing:border-box;border:1px solid #c4c4c4"></div><svg style="position:absolute;left:1759px;top:348px" width="30" height="30" viewBox="0 0 30 30"><path d="M11 13.2L15.1 17.4L19.3 13.2" fill="none" stroke="#858585" stroke-width="1.7"/></svg><div style="position:absolute;left:1759px;top:385px;width:30px;height:30px;background:#d1d1d1;box-sizing:border-box;border:1px solid #c4c4c4"></div><svg style="position:absolute;left:1759px;top:385px" width="30" height="30" viewBox="0 0 30 30"><path d="M11 9.9L15.1 14.1L19.3 9.9M11 15.4L15.1 19.6L19.3 15.4" fill="none" stroke="#858585" stroke-width="1.7"/></svg><svg style="position:absolute;left:521px;top:486px;overflow:visible" width="32" height="34" viewBox="0 0 32 34"><path d="M2 1.9H25.7V17.4M2 1.9V31.8H16.7M2 8.85H25.7M9.85 1.9V31.8M17.95 1.9V26.6" fill="none" stroke="#767676" stroke-width="1.9" stroke-linecap="square"/><circle cx="23.5" cy="21.4" r="3.6" fill="#3b74b4" stroke="#fff" stroke-width="1.4" paint-order="stroke"/><path d="M18.1 32.8V31.5C18.1 28.2 20.4 26 23.5 26S28.9 28.2 28.9 31.5V32.8z" fill="#3b74b4" stroke="#fff" stroke-width="1.4" paint-order="stroke"/></svg><div style="position:absolute;left:516px;top:522px;width:1284px;height:1px;background:#a0a0a0"></div><div style="position:absolute;left:516px;top:558px;width:564px;height:21px;background:#fff;box-sizing:border-box;border:1px solid #6f6f6f;box-shadow:inset 0 0 0 0.5px #9a9a9a"></div><svg style="position:absolute;left:518px;top:561px" width="16" height="17" viewBox="0 0 16 17"><circle cx="9.6" cy="7.4" r="4.9" fill="none" stroke="#2f6db5" stroke-width="2"/><path d="M6 10.9L1.2 15.4" stroke="#2f6db5" stroke-width="2.8"/></svg><svg style="position:absolute;left:1062px;top:561px" width="16" height="16" viewBox="0 0 16 16"><path d="M2.4 2.4L13.6 13.6M13.6 2.4L2.4 13.6" stroke="#b3b3b3" stroke-width="3.2"/></svg><div style="position:absolute;left:516px;top:582px;width:564px;height:178px;background:#fff;box-sizing:border-box;border:1px solid #a4a6ac"></div><svg style="position:absolute;left:609px;top:590px" width="9" height="7" viewBox="0 0 9 7"><path d="M1 5.5l3.5-3.5 3.5 3.5" fill="none" stroke="#777" stroke-width="1.2"/></svg><div style="position:absolute;left:767px;top:584px;width:1px;height:19px;background:#e5e5e5"></div><div style="position:absolute;left:917px;top:584px;width:1px;height:19px;background:#e5e5e5"></div><div style="position:absolute;left:1017px;top:584px;width:1px;height:19px;background:#e5e5e5"></div><svg style="position:absolute;left:542px;top:604px;overflow:visible" width="16" height="16" viewBox="0 0 16 16"><path d="M0.9 5.9V2.2Q0.9 1 2.1 1H6.4L8 2.6H13.8Q14.9 2.6 14.9 3.7V5.9z" fill="#98742c"/><path d="M0.1 7.1H15.9L15.1 14.1Q15 15 14 15H2Q1 15 0.9 14.1z" fill="#e9b660"/></svg><div style="position:absolute;left:518px;top:621px;width:500px;height:18px;background:#d9d9d9"></div><svg style="position:absolute;left:528.2px;top:625px;overflow:visible" width="8" height="11" viewBox="0 0 8 11"><path d="M1.9 1.5L6.1 5.4L1.9 9.3" fill="none" stroke="#a3a3a3" stroke-width="1.8"/></svg><svg style="position:absolute;left:542px;top:622px;overflow:visible" width="16" height="16" viewBox="0 0 16 16"><path d="M0.9 5.9V2.2Q0.9 1 2.1 1H6.4L8 2.6H13.8Q14.9 2.6 14.9 3.7V5.9z" fill="#98742c"/><path d="M0.1 7.1H15.9L15.1 14.1Q15 15 14 15H2Q1 15 0.9 14.1z" fill="#e9b660"/></svg><div style="position:absolute;left:1117px;top:558px;width:635px;height:202px;background:#fff;box-sizing:border-box;border:1px solid #a4a6ac"></div><div style="position:absolute;left:1087px;top:629px;width:23px;height:23px;background:#e1e1e1;box-sizing:border-box;border:1px solid #adadad"></div><svg style="position:absolute;left:1087px;top:629px" width="23" height="23" viewBox="0 0 23 23"><path d="M8.3 8.2L14.2 11.5L8.3 14.8" fill="none" stroke="#222" stroke-width="0.95"/></svg><div style="position:absolute;left:1087px;top:660px;width:23px;height:23px;background:#e1e1e1;box-sizing:border-box;border:1px solid #adadad"></div><svg style="position:absolute;left:1087px;top:660px" width="23" height="23" viewBox="0 0 23 23"><path d="M14.2 8.2L8.3 11.5L14.2 14.8" fill="none" stroke="#222" stroke-width="0.95"/></svg><div style="position:absolute;left:1318px;top:560px;width:1px;height:19px;background:#e5e5e5"></div><div style="position:absolute;left:1518px;top:560px;width:1px;height:19px;background:#e5e5e5"></div><div style="position:absolute;left:1618px;top:560px;width:1px;height:19px;background:#e5e5e5"></div><div style="position:absolute;left:1119px;top:579px;width:500px;height:36px;background:#c4c4c4"></div><svg style="position:absolute;left:1129px;top:580px" width="7" height="16" viewBox="0 0 7 16"><rect x="1.5" y="0.5" width="4" height="15" fill="#fff" stroke="#777" stroke-width="1"/><path d="M1.5 3.5h4" stroke="#777" stroke-width="1"/></svg><svg style="position:absolute;left:1129px;top:598px" width="7" height="16" viewBox="0 0 7 16"><rect x="1.5" y="0.5" width="4" height="15" fill="#fff" stroke="#777" stroke-width="1"/><path d="M1.5 3.5h4" stroke="#777" stroke-width="1"/></svg><div style="position:absolute;left:1759px;top:558px;width:30px;height:30px;background:#d1d1d1;box-sizing:border-box;border:1px solid #c4c4c4"></div><svg style="position:absolute;left:1759px;top:558px" width="30" height="30" viewBox="0 0 30 30"><path d="M11 14.7L15.1 10.5L19.3 14.7M11 20.2L15.1 16L19.3 20.2" fill="none" stroke="#858585" stroke-width="1.7"/></svg><div style="position:absolute;left:1759px;top:595px;width:30px;height:30px;background:#d1d1d1;box-sizing:border-box;border:1px solid #c4c4c4"></div><svg style="position:absolute;left:1759px;top:595px" width="30" height="30" viewBox="0 0 30 30"><path d="M11 17.1L15.1 12.9L19.3 17.1" fill="none" stroke="#858585" stroke-width="1.7"/></svg><div style="position:absolute;left:1759px;top:632px;width:30px;height:30px;background:#d1d1d1;box-sizing:border-box;border:1px solid #c4c4c4"></div><svg style="position:absolute;left:1759px;top:632px" width="30" height="30" viewBox="0 0 30 30"><path d="M11 13.2L15.1 17.4L19.3 13.2" fill="none" stroke="#858585" stroke-width="1.7"/></svg><div style="position:absolute;left:1759px;top:669px;width:30px;height:30px;background:#d1d1d1;box-sizing:border-box;border:1px solid #c4c4c4"></div><svg style="position:absolute;left:1759px;top:669px" width="30" height="30" viewBox="0 0 30 30"><path d="M11 9.9L15.1 14.1L19.3 9.9M11 15.4L15.1 19.6L19.3 15.4" fill="none" stroke="#858585" stroke-width="1.7"/></svg><div style="position:absolute;left:0px;top:789px;width:1812px;height:1px;background:#cfe6f8"></div><div style="position:absolute;left:0px;top:790px;width:1812px;height:23px;background:#f3f2f1"></div>
<div style="position:absolute;left:366.00px;top:11.84px;font-size:12px;line-height:12px;font-weight:400;color:#ffffff;letter-spacing:-0.055px;white-space:nowrap">Einstellungen</div><div style="position:absolute;left:818.00px;top:10.34px;font-size:12px;line-height:12px;font-weight:400;color:#ffffff;letter-spacing:0.068px;white-space:nowrap">ACMP Console -- Angemeldet als Administrator</div><div style="position:absolute;left:10.70px;top:42.04px;font-size:12px;line-height:12px;font-weight:400;color:#262626;letter-spacing:-0.343px;white-space:nowrap">System</div><div style="position:absolute;left:77.70px;top:42.04px;font-size:12px;line-height:12px;font-weight:400;color:#262626;letter-spacing:0.430px;white-space:nowrap">Monitore</div><div style="position:absolute;left:153.60px;top:42.04px;font-size:12px;line-height:12px;font-weight:400;color:#262626;letter-spacing:0.039px;white-space:nowrap">Stammdaten</div><div style="position:absolute;left:248.70px;top:42.04px;font-size:12px;line-height:12px;font-weight:400;color:#262626;letter-spacing:0.050px;white-space:nowrap">Abfrageaktionen</div><div style="position:absolute;left:364.70px;top:42.04px;font-size:12px;line-height:12px;font-weight:700;color:#1e1e1e;letter-spacing:-0.324px;white-space:nowrap">Einstellungen</div><div style="position:absolute;left:1728.00px;top:39.84px;font-size:12px;line-height:12px;font-weight:400;color:#2f5c9e;letter-spacing:0.209px;white-space:nowrap">Administrator</div><div style="position:absolute;left:17.80px;top:108.04px;font-size:12px;line-height:12px;font-weight:400;color:#262626;letter-spacing:-0.042px;white-space:nowrap">Aktualisieren</div><div style="position:absolute;left:101.70px;top:108.04px;font-size:12px;line-height:12px;font-weight:400;color:#262626;letter-spacing:-0.168px;white-space:nowrap">Speichern</div><div style="position:absolute;left:59.00px;top:142.84px;font-size:12px;line-height:12px;font-weight:400;color:#262626;letter-spacing:0.112px;white-space:nowrap">Allgemein</div><div style="position:absolute;left:4.30px;top:167.91px;font-size:10.5px;line-height:10.5px;font-weight:400;color:#000;letter-spacing:0.153px;white-space:nowrap">Navigation</div><div style="position:absolute;left:46.30px;top:189.81px;font-size:10.5px;line-height:10.5px;font-weight:400;color:#000;letter-spacing:-0.021px;white-space:nowrap">Überblick</div><div style="position:absolute;left:46.30px;top:207.81px;font-size:10.5px;line-height:10.5px;font-weight:400;color:#000;letter-spacing:0.090px;white-space:nowrap">Client Management</div><div style="position:absolute;left:46.30px;top:225.81px;font-size:10.5px;line-height:10.5px;font-weight:400;color:#000;letter-spacing:0.201px;white-space:nowrap">Desktop Automation</div><div style="position:absolute;left:46.30px;top:243.81px;font-size:10.5px;line-height:10.5px;font-weight:400;color:#000;letter-spacing:0.116px;white-space:nowrap">Patch Management</div><div style="position:absolute;left:46.30px;top:261.81px;font-size:10.5px;line-height:10.5px;font-weight:400;color:#000;letter-spacing:0.195px;white-space:nowrap">Security</div><div style="position:absolute;left:46.30px;top:279.81px;font-size:10.5px;line-height:10.5px;font-weight:400;color:#000;letter-spacing:0.071px;white-space:nowrap">Jobs</div><div style="position:absolute;left:46.30px;top:297.81px;font-size:10.5px;line-height:10.5px;font-weight:400;color:#000;letter-spacing:0.040px;white-space:nowrap">OS Deployment</div><div style="position:absolute;left:46.30px;top:315.81px;font-size:10.5px;line-height:10.5px;font-weight:400;color:#000;letter-spacing:0.250px;white-space:nowrap">Intune Management</div><div style="position:absolute;left:46.30px;top:333.81px;font-size:10.5px;line-height:10.5px;font-weight:400;color:#000;letter-spacing:0.155px;white-space:nowrap">Asset Management</div><div style="position:absolute;left:46.30px;top:351.81px;font-size:10.5px;line-height:10.5px;font-weight:400;color:#000;letter-spacing:0.011px;white-space:nowrap">Lizenzmanagement</div><div style="position:absolute;left:46.30px;top:369.81px;font-size:10.5px;line-height:10.5px;font-weight:400;color:#000;letter-spacing:-0.026px;white-space:nowrap">Helpdesk</div><div style="position:absolute;left:46.30px;top:387.81px;font-size:10.5px;line-height:10.5px;font-weight:400;color:#000;letter-spacing:-0.003px;white-space:nowrap">System</div><div style="position:absolute;left:64.30px;top:405.81px;font-size:10.5px;line-height:10.5px;font-weight:400;color:#000;letter-spacing:-0.064px;white-space:nowrap">ACMP Update</div><div style="position:absolute;left:64.30px;top:423.81px;font-size:10.5px;line-height:10.5px;font-weight:400;color:#000;letter-spacing:0.098px;white-space:nowrap">Verteilte File Repositories</div><div style="position:absolute;left:64.30px;top:441.81px;font-size:10.5px;line-height:10.5px;font-weight:400;color:#000;letter-spacing:-0.226px;white-space:nowrap">ACMP Lizenzen</div><div style="position:absolute;left:64.30px;top:459.81px;font-size:10.5px;line-height:10.5px;font-weight:400;color:#000;letter-spacing:0.207px;white-space:nowrap">Sperren</div><div style="position:absolute;left:64.30px;top:477.81px;font-size:10.5px;line-height:10.5px;font-weight:400;color:#000;letter-spacing:0.257px;white-space:nowrap">Mandanten</div><div style="position:absolute;left:64.30px;top:495.81px;font-size:10.5px;line-height:10.5px;font-weight:400;color:#000;letter-spacing:0.009px;white-space:nowrap">ACMP Gateway</div><div style="position:absolute;left:64.30px;top:513.81px;font-size:10.5px;line-height:10.5px;font-weight:400;color:#000;letter-spacing:0.013px;white-space:nowrap">Einstellungen</div><div style="position:absolute;left:64.30px;top:531.81px;font-size:10.5px;line-height:10.5px;font-weight:400;color:#000;letter-spacing:0.282px;white-space:nowrap">Benutzerverwaltung</div><div style="position:absolute;left:244.30px;top:167.91px;font-size:10.5px;line-height:10.5px;font-weight:400;color:#000;letter-spacing:0.047px;white-space:nowrap">System / Einstellungen</div><div style="position:absolute;left:260.00px;top:191.41px;font-size:10.5px;line-height:10.5px;font-weight:400;color:#555;letter-spacing:-0.065px;white-space:nowrap">Suchen</div><div style="position:absolute;left:289.50px;top:219.81px;font-size:10.5px;line-height:10.5px;font-weight:400;color:#000;letter-spacing:0.051px;white-space:nowrap">ACMP Agent</div><div style="position:absolute;left:289.50px;top:237.81px;font-size:10.5px;line-height:10.5px;font-weight:400;color:#000;letter-spacing:-0.120px;white-space:nowrap">ACMP Server</div><div style="position:absolute;left:289.50px;top:255.81px;font-size:10.5px;line-height:10.5px;font-weight:400;color:#000;letter-spacing:0.122px;white-space:nowrap">Asset Management</div><div style="position:absolute;left:289.50px;top:273.81px;font-size:10.5px;line-height:10.5px;font-weight:400;color:#000;letter-spacing:0.177px;white-space:nowrap">Defender Management</div><div style="position:absolute;left:289.50px;top:291.81px;font-size:10.5px;line-height:10.5px;font-weight:400;color:#000;letter-spacing:-0.118px;white-space:nowrap">Client Commands</div><div style="position:absolute;left:289.50px;top:309.81px;font-size:10.5px;line-height:10.5px;font-weight:400;color:#000;letter-spacing:0.150px;white-space:nowrap">Benutzerdefinierte Felder</div><div style="position:absolute;left:289.50px;top:327.81px;font-size:10.5px;line-height:10.5px;font-weight:400;color:#000;letter-spacing:-0.069px;white-space:nowrap">Helpdesk</div><div style="position:absolute;left:289.50px;top:345.81px;font-size:10.5px;line-height:10.5px;font-weight:400;color:#000;letter-spacing:0.126px;white-space:nowrap">Anhänge</div><div style="position:absolute;left:289.50px;top:363.81px;font-size:10.5px;line-height:10.5px;font-weight:400;color:#000;letter-spacing:-0.313px;white-space:nowrap">E-Mail</div><div style="position:absolute;left:289.50px;top:381.81px;font-size:10.5px;line-height:10.5px;font-weight:400;color:#000;letter-spacing:0.015px;white-space:nowrap">E-Mail Vorlagen für Eskalationen</div><div style="position:absolute;left:289.50px;top:399.81px;font-size:10.5px;line-height:10.5px;font-weight:400;color:#000;letter-spacing:-0.030px;white-space:nowrap">Eskalationen</div><div style="position:absolute;left:289.50px;top:417.81px;font-size:10.5px;line-height:10.5px;font-weight:400;color:#000;letter-spacing:0.103px;white-space:nowrap">Interne E-Mail Vorlagen</div><div style="position:absolute;left:289.50px;top:435.81px;font-size:10.5px;line-height:10.5px;font-weight:400;color:#000;letter-spacing:0.145px;white-space:nowrap">Kategorien</div><div style="position:absolute;left:289.50px;top:453.81px;font-size:10.5px;line-height:10.5px;font-weight:400;color:#000;letter-spacing:-0.009px;white-space:nowrap">KB-Artikel drucken</div><div style="position:absolute;left:289.50px;top:471.81px;font-size:10.5px;line-height:10.5px;font-weight:400;color:#000;letter-spacing:0.007px;white-space:nowrap">Kontakt E-Mail Vorlagen</div><div style="position:absolute;left:289.50px;top:489.81px;font-size:10.5px;line-height:10.5px;font-weight:400;color:#000;letter-spacing:-0.049px;white-space:nowrap">Lösungen</div><div style="position:absolute;left:289.50px;top:507.81px;font-size:10.5px;line-height:10.5px;font-weight:400;color:#000;letter-spacing:0.184px;white-space:nowrap">Rechtschreibprüfung</div><div style="position:absolute;left:289.50px;top:525.81px;font-size:10.5px;line-height:10.5px;font-weight:400;color:#000;letter-spacing:-0.096px;white-space:nowrap">Regeln</div><div style="position:absolute;left:289.50px;top:543.81px;font-size:10.5px;line-height:10.5px;font-weight:400;color:#000;letter-spacing:0.375px;white-space:nowrap">Textbausteine</div><div style="position:absolute;left:289.50px;top:561.81px;font-size:10.5px;line-height:10.5px;font-weight:400;color:#000;letter-spacing:0.174px;white-space:nowrap">Ticketfelder</div><div style="position:absolute;left:289.50px;top:579.81px;font-size:10.5px;line-height:10.5px;font-weight:400;color:#000;letter-spacing:0.083px;white-space:nowrap">Tickets drucken</div><div style="position:absolute;left:289.50px;top:597.81px;font-size:10.5px;line-height:10.5px;font-weight:400;color:#000;letter-spacing:0.223px;white-space:nowrap">Zeiterfassung</div><div style="position:absolute;left:289.50px;top:615.81px;font-size:10.5px;line-height:10.5px;font-weight:400;color:#000;letter-spacing:0.243px;white-space:nowrap">Intune Management</div><div style="position:absolute;left:289.50px;top:633.81px;font-size:10.5px;line-height:10.5px;font-weight:400;color:#000;letter-spacing:-0.009px;white-space:nowrap">Lizenzmanagement</div><div style="position:absolute;left:289.50px;top:651.81px;font-size:10.5px;line-height:10.5px;font-weight:400;color:#000;letter-spacing:0.177px;white-space:nowrap">Managed Software</div><div style="position:absolute;left:289.50px;top:669.81px;font-size:10.5px;line-height:10.5px;font-weight:400;color:#000;letter-spacing:0.052px;white-space:nowrap">Stammdaten</div><div style="position:absolute;left:289.50px;top:687.81px;font-size:10.5px;line-height:10.5px;font-weight:400;color:#000;letter-spacing:0.023px;white-space:nowrap">OS Deployment</div><div style="position:absolute;left:289.50px;top:705.81px;font-size:10.5px;line-height:10.5px;font-weight:400;color:#000;letter-spacing:0.008px;white-space:nowrap">Unix Scripts</div><div style="position:absolute;left:289.50px;top:723.81px;font-size:10.5px;line-height:10.5px;font-weight:400;color:#000;letter-spacing:0.401px;white-space:nowrap">Web Interface</div><div style="position:absolute;left:289.50px;top:741.81px;font-size:10.5px;line-height:10.5px;font-weight:400;color:#000;letter-spacing:0.118px;white-space:nowrap">Windows Update Management</div><div style="position:absolute;left:556.70px;top:210.63px;font-size:16.5px;line-height:16.5px;font-weight:400;color:#000;letter-spacing:-0.012px;white-space:nowrap">Ticketbezogene Felder</div><div style="position:absolute;left:515.40px;top:258.41px;font-size:10.5px;line-height:10.5px;font-weight:400;color:#000;letter-spacing:0.171px;white-space:nowrap">Verfügbare Felder</div><div style="position:absolute;left:536.00px;top:279.41px;font-size:10.5px;line-height:10.5px;font-weight:400;color:#555;letter-spacing:-0.065px;white-space:nowrap">Suchen</div><div style="position:absolute;left:523.10px;top:305.11px;font-size:10.5px;line-height:10.5px;font-weight:400;color:#000;letter-spacing:-0.132px;white-space:nowrap">Englischer Name</div><div style="position:absolute;left:773.00px;top:305.11px;font-size:10.5px;line-height:10.5px;font-weight:400;color:#000;letter-spacing:0.048px;white-space:nowrap">Deutscher Name</div><div style="position:absolute;left:923.10px;top:305.11px;font-size:10.5px;line-height:10.5px;font-weight:400;color:#000;letter-spacing:0.344px;white-space:nowrap">Feldtyp</div><div style="position:absolute;left:563.20px;top:323.11px;font-size:10.5px;line-height:10.5px;font-weight:400;color:#000;letter-spacing:-0.067px;white-space:nowrap">Custom Fields</div><div style="position:absolute;left:563.20px;top:341.11px;font-size:10.5px;line-height:10.5px;font-weight:400;color:#000;letter-spacing:0.224px;white-space:nowrap">Standardfelder</div><div style="position:absolute;left:1116.10px;top:258.41px;font-size:10.5px;line-height:10.5px;font-weight:400;color:#000;letter-spacing:0.146px;white-space:nowrap">Ausgewählte Felder</div><div style="position:absolute;left:1123.80px;top:281.11px;font-size:10.5px;line-height:10.5px;font-weight:400;color:#000;letter-spacing:-0.132px;white-space:nowrap">Englischer Name</div><div style="position:absolute;left:1324.00px;top:281.11px;font-size:10.5px;line-height:10.5px;font-weight:400;color:#000;letter-spacing:0.048px;white-space:nowrap">Deutscher Name</div><div style="position:absolute;left:1524.00px;top:281.11px;font-size:10.5px;line-height:10.5px;font-weight:400;color:#000;letter-spacing:0.344px;white-space:nowrap">Feldtyp</div><div style="position:absolute;left:1623.90px;top:281.11px;font-size:10.5px;line-height:10.5px;font-weight:400;color:#000;letter-spacing:0.227px;white-space:nowrap">Pflichtfeld</div><div style="position:absolute;left:1146.50px;top:298.81px;font-size:10.5px;line-height:10.5px;font-weight:400;color:#000;letter-spacing:0.104px;white-space:nowrap">Ticket Keywords</div><div style="position:absolute;left:1327.90px;top:298.81px;font-size:10.5px;line-height:10.5px;font-weight:400;color:#000;letter-spacing:0.288px;white-space:nowrap">Stichwörter</div><div style="position:absolute;left:1528.40px;top:298.81px;font-size:10.5px;line-height:10.5px;font-weight:400;color:#000;letter-spacing:1.078px;white-space:nowrap">Text</div><div style="position:absolute;left:556.70px;top:494.63px;font-size:16.5px;line-height:16.5px;font-weight:400;color:#000;letter-spacing:-0.043px;white-space:nowrap">Kontaktbezogene Felder</div><div style="position:absolute;left:515.40px;top:542.41px;font-size:10.5px;line-height:10.5px;font-weight:400;color:#000;letter-spacing:0.171px;white-space:nowrap">Verfügbare Felder</div><div style="position:absolute;left:536.00px;top:563.41px;font-size:10.5px;line-height:10.5px;font-weight:400;color:#555;letter-spacing:-0.065px;white-space:nowrap">Suchen</div><div style="position:absolute;left:523.10px;top:589.11px;font-size:10.5px;line-height:10.5px;font-weight:400;color:#000;letter-spacing:-0.132px;white-space:nowrap">Englischer Name</div><div style="position:absolute;left:773.00px;top:589.11px;font-size:10.5px;line-height:10.5px;font-weight:400;color:#000;letter-spacing:0.048px;white-space:nowrap">Deutscher Name</div><div style="position:absolute;left:923.10px;top:589.11px;font-size:10.5px;line-height:10.5px;font-weight:400;color:#000;letter-spacing:0.344px;white-space:nowrap">Feldtyp</div><div style="position:absolute;left:563.20px;top:607.11px;font-size:10.5px;line-height:10.5px;font-weight:400;color:#000;letter-spacing:-0.067px;white-space:nowrap">Custom Fields</div><div style="position:absolute;left:563.20px;top:625.11px;font-size:10.5px;line-height:10.5px;font-weight:400;color:#000;letter-spacing:0.224px;white-space:nowrap">Standardfelder</div><div style="position:absolute;left:1116.10px;top:542.41px;font-size:10.5px;line-height:10.5px;font-weight:400;color:#000;letter-spacing:0.146px;white-space:nowrap">Ausgewählte Felder</div><div style="position:absolute;left:1123.80px;top:565.11px;font-size:10.5px;line-height:10.5px;font-weight:400;color:#000;letter-spacing:-0.132px;white-space:nowrap">Englischer Name</div><div style="position:absolute;left:1324.00px;top:565.11px;font-size:10.5px;line-height:10.5px;font-weight:400;color:#000;letter-spacing:0.048px;white-space:nowrap">Deutscher Name</div><div style="position:absolute;left:1524.00px;top:565.11px;font-size:10.5px;line-height:10.5px;font-weight:400;color:#000;letter-spacing:0.344px;white-space:nowrap">Feldtyp</div><div style="position:absolute;left:1146.50px;top:582.81px;font-size:10.5px;line-height:10.5px;font-weight:400;color:#000;letter-spacing:0.094px;white-space:nowrap">Contact Last Name</div><div style="position:absolute;left:1327.90px;top:582.81px;font-size:10.5px;line-height:10.5px;font-weight:400;color:#000;letter-spacing:-0.026px;white-space:nowrap">Nachname</div><div style="position:absolute;left:1528.40px;top:582.81px;font-size:10.5px;line-height:10.5px;font-weight:400;color:#000;letter-spacing:1.078px;white-space:nowrap">Text</div><div style="position:absolute;left:1146.50px;top:600.81px;font-size:10.5px;line-height:10.5px;font-weight:400;color:#000;letter-spacing:0.103px;white-space:nowrap">Contact First Name</div><div style="position:absolute;left:1327.90px;top:600.81px;font-size:10.5px;line-height:10.5px;font-weight:400;color:#000;letter-spacing:0.061px;white-space:nowrap">Vorname</div><div style="position:absolute;left:1528.40px;top:600.81px;font-size:10.5px;line-height:10.5px;font-weight:400;color:#000;letter-spacing:1.078px;white-space:nowrap">Text</div><div style="position:absolute;left:0.70px;top:797.61px;font-size:10.5px;line-height:10.5px;font-weight:400;color:#000;letter-spacing:0.169px;white-space:nowrap">© Aagon GmbH 2002 - 2025, all rights reserved</div>
</body></html>
